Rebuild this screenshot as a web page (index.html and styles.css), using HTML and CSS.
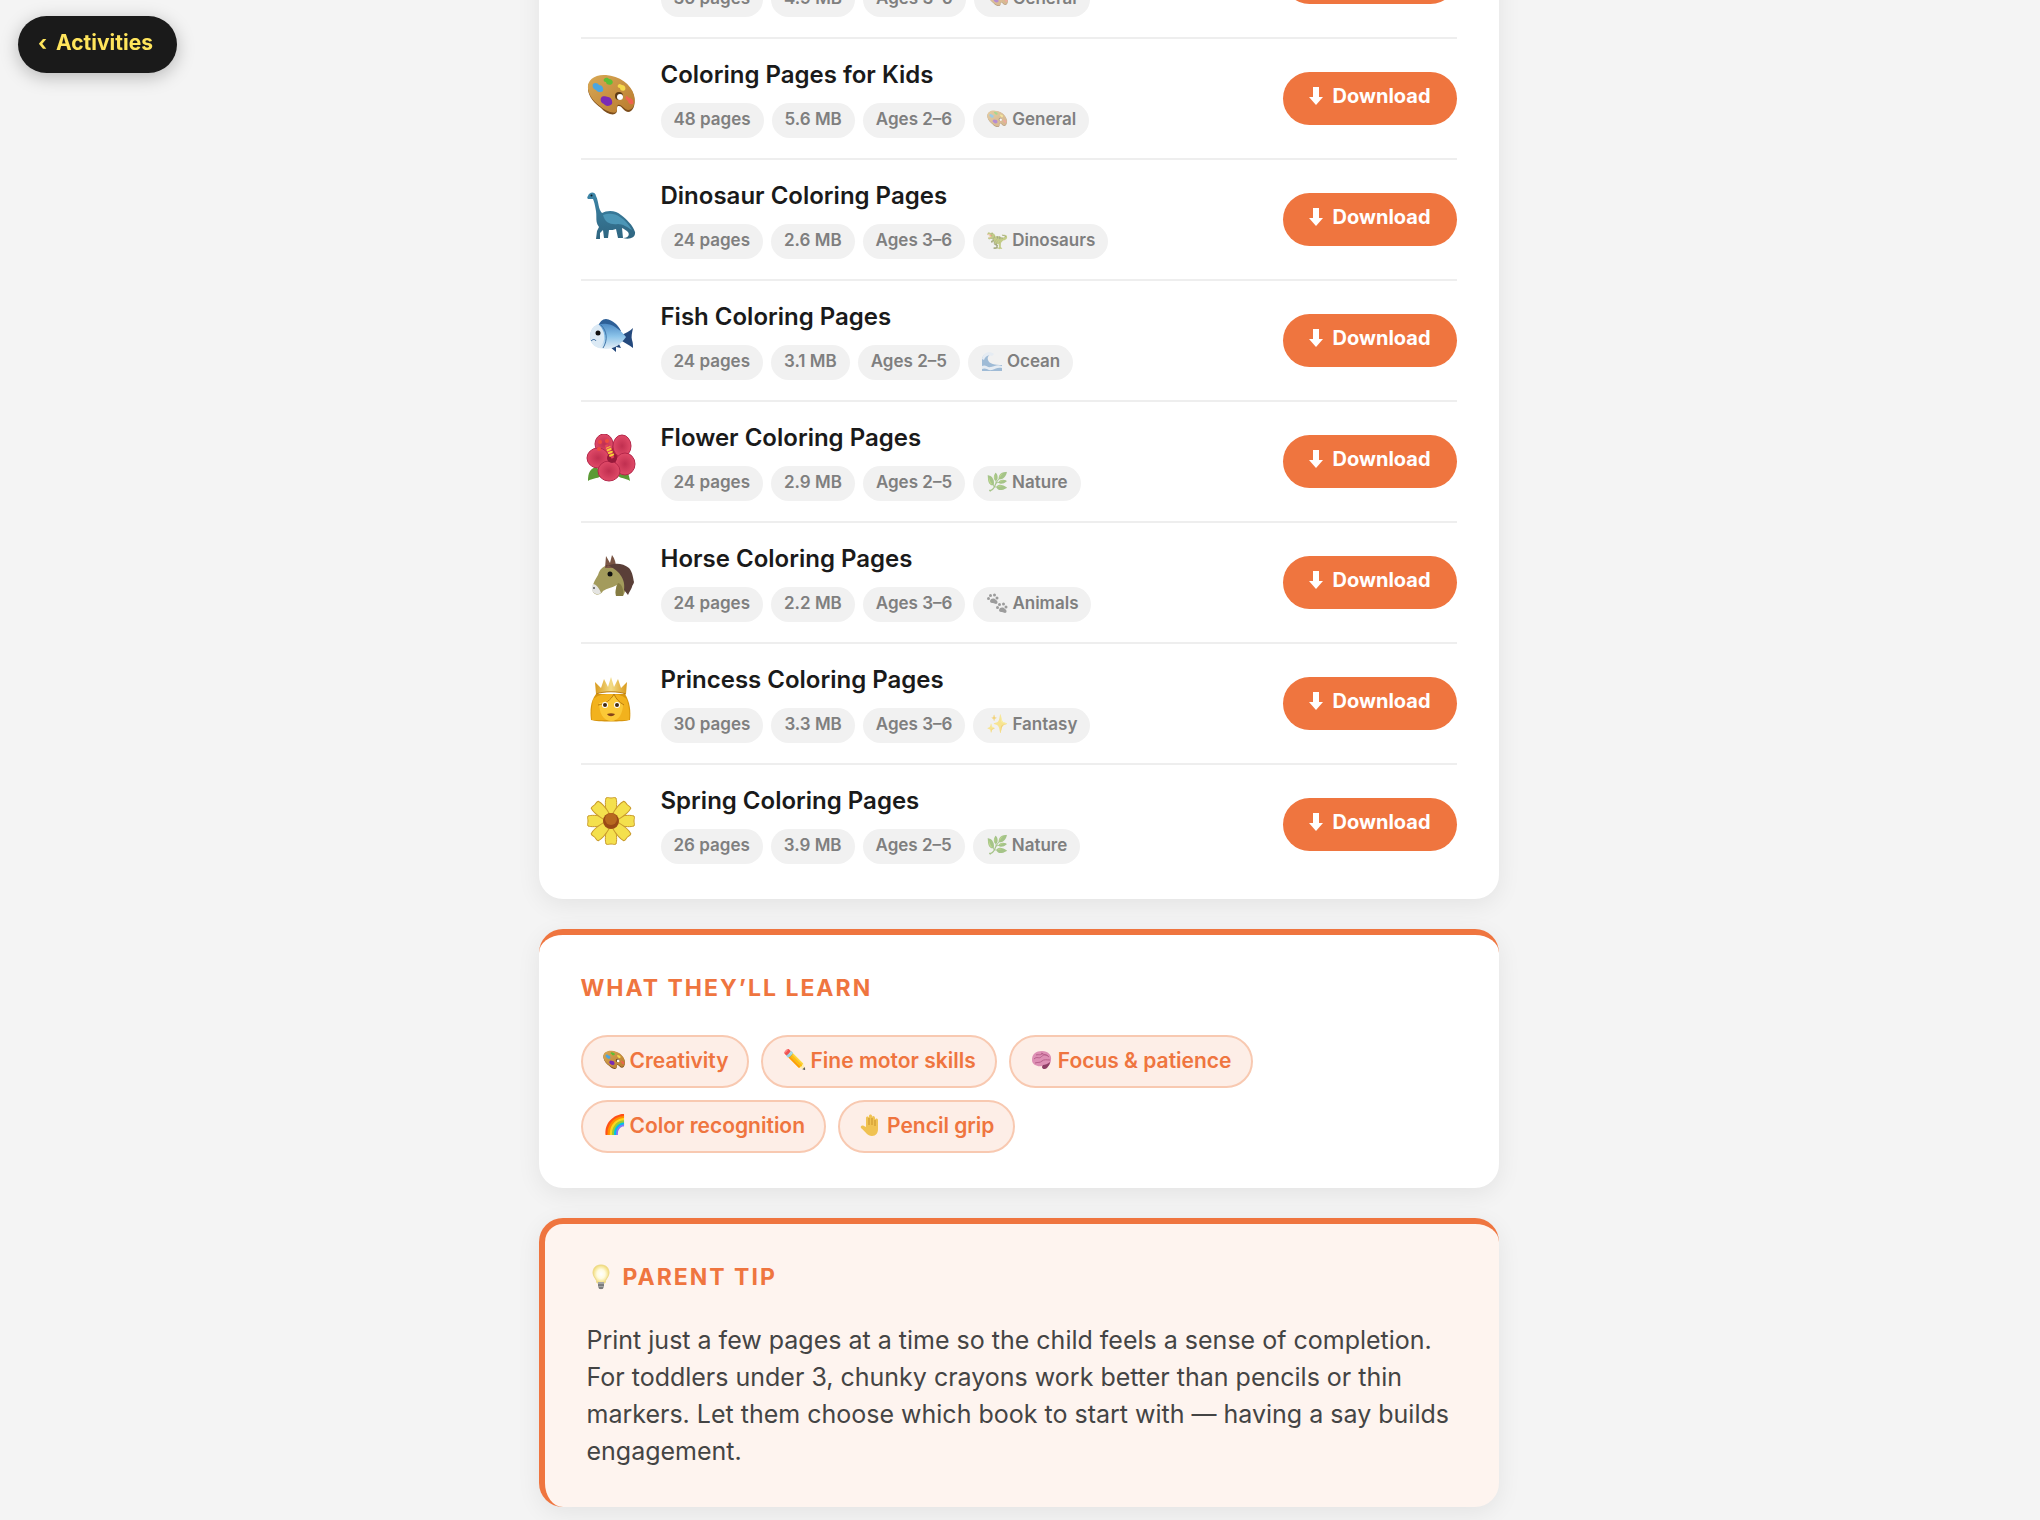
FILE: index.html
```html
<!DOCTYPE html>
<html lang="en">
<head>
  <meta charset="UTF-8">
  <meta name="viewport" content="width=device-width, initial-scale=1">
  <title>Coloring Pages</title>
  <link rel="stylesheet" href="styles.css">
</head>
<body>

  <!-- Icon set -->
  <svg class="sprite" aria-hidden="true">
    <defs>
      <linearGradient id="woodFill" x1="0" y1="0" x2="1" y2="1">
        <stop offset="0" stop-color="#d9a955"/>
        <stop offset="1" stop-color="#b87a2e"/>
      </linearGradient>
      <linearGradient id="dinoFill" x1="0" y1="0" x2="0" y2="1">
        <stop offset="0" stop-color="#3d86a8"/>
        <stop offset="1" stop-color="#2f6580"/>
      </linearGradient>
      <linearGradient id="fishFill" x1="0" y1="0" x2="0" y2="1">
        <stop offset="0" stop-color="#4f8cc6"/>
        <stop offset=".5" stop-color="#8cc4ea"/>
        <stop offset="1" stop-color="#e6eff6"/>
      </linearGradient>
      <linearGradient id="crownFill" x1="0" y1="0" x2="1" y2="0">
        <stop offset="0" stop-color="#d99a1c"/>
        <stop offset=".5" stop-color="#f3dc86"/>
        <stop offset="1" stop-color="#d99a1c"/>
      </linearGradient>
      <radialGradient id="petalFill">
        <stop offset="0" stop-color="#c02f50"/>
        <stop offset="1" stop-color="#e04a68"/>
      </radialGradient>
      <radialGradient id="bulbFill">
        <stop offset="0" stop-color="#ffffff"/>
        <stop offset=".5" stop-color="#fffbe0"/>
        <stop offset="1" stop-color="#f3dd7c"/>
      </radialGradient>
    </defs>

    <symbol id="palette" viewBox="0 0 48 48">
      <path d="M1 18C0 10 8 4 19 5c13 1 25 9 28 20 2 9-1 16-6 16-5-1-6-7-10-6-2 1 0 5-2 7-2 3-10 1-15-5C7 32 2 26 1 19z" fill="#7d4e1c"/>
      <path d="M1 17C0 9 8 3 19 4c13 1 25 9 28 20 2 9-1 15-6 15-5-1-6-6-10-5-2 1 0 5-2 7-2 2-10-1-15-5C7 31 2 25 1 18z" fill="url(#woodFill)"/>
      <circle cx="32" cy="25" r="4" fill="#5d3a15"/>
      <circle cx="33" cy="26" r="3" fill="#fff"/>
      <path d="M6 13c2-2 5-1 6 1 3 0 5 3 4 6-2 2-6 1-7-1-3-1-4-4-3-6z" fill="#4ba6e0"/>
      <path d="M17 8c2-2 4-1 5 0 3 0 5 3 3 5-3 2-6 0-6-2-2 0-3-2-2-3z" fill="#5cbf35"/>
      <path d="M31 14c2-2 3 0 4 0 3 0 4 3 3 5-3 2-5 0-5-2-2 0-3-2-2-3z" fill="#f5d94a"/>
      <path d="M39 25c2 0 2 2 4 2 3 1 4 4 3 6-3 1-5-1-5-3-2-1-3-3-2-5z" fill="#ef6350"/>
      <path d="M14 27c2-3 5-1 7-1 3 0 5 4 4 7-3 3-7 2-8 0-3-1-4-4-3-6z" fill="#7a2bb5"/>
    </symbol>

    <symbol id="sauropod" viewBox="0 0 48 48">
      <path d="M1 4C2 0 8-1 9 4c3 6 2 13 6 17 5-3 14-3 19 2 5 4 12 10 14 17 1 6-6 8-12 6 5 0 7-3 5-6-2-2-4-3-6-4l1 10h-5l-2-9c-2 1-5 1-7 1l-1 8h-4l-1-8-3 3 0 6H9l1-8 2-4c-4-5-2-10-3-16C8 13 7 9 6 7H1C0 6 0 5 1 4z" fill="url(#dinoFill)"/>
      <path d="M16 23c5-2 12-2 17 2 5 3 9 8 12 13-5-3-9-6-14-6-7 1-13-1-15-9z" fill="#4c96b6"/>
      <circle cx="4.500" cy="3.500" r="1" fill="#0d1d26"/>
    </symbol>

    <symbol id="fish" viewBox="0 0 48 48">
      <path d="M11 13c2-4 4-7 8-7 7 1 12 6 15 12l-8 5z" fill="#2d5f97"/>
      <path d="M33 22c5-1 10-4 13-7-1 5-2 9-1 12 1 3 1 5 1 8-4-3-9-6-13-8z" fill="#24497d"/>
      <path d="M22 33l7 6 0-5 5 1-3-6z" fill="#24497d"/>
      <path d="M3 23C4 14 11 10 20 11c8 1 14 7 19 13-5 7-11 12-20 12C10 36 3 32 3 23z" fill="url(#fishFill)"/>
      <path d="M3 23c0-7 4-10 8-12 5 4 7 10 6 16-1 4-3 6-5 8-5-2-9-5-9-12z" fill="#dceaf5"/>
      <path d="M14 12c6 6 7 15 2 23" fill="none" stroke="#3f74a8"/>
      <circle cx="11" cy="20" r="2.500" fill="#111"/>
      <path d="M4 28c2-2 4-2 5 0" fill="none" stroke="#2d5f97"/>
    </symbol>

    <symbol id="hibiscus" viewBox="0 0 48 48">
      <path d="M1 47c0-8 2-13 9-14l4 9c-4 3-9 2-13 5zM43 47c-1-7-3-12-8-14l-4 9c4 3 8 2 12 5z" fill="#5b9a35"/>
      <circle cx="24" cy="23" r="10" fill="#a81e40"/>
      <g fill="url(#petalFill)" stroke="#b5274a">
        <ellipse cx="35" cy="12" rx="9" ry="11"/>
        <ellipse cx="17" cy="10" rx="9" ry="10"/>
        <ellipse cx="11" cy="24" rx="11" ry="10"/>
        <ellipse cx="38" cy="30" rx="10" ry="11"/>
        <ellipse cx="22" cy="37" rx="11" ry="10"/>
      </g>
      <circle cx="25" cy="24" r="5" fill="#96193a"/>
      <path d="M26 24L19 11" stroke="#e8445c" stroke-width="3"/>
      <path d="M25 22l-4-9" stroke="#f7d437" stroke-width="5" stroke-dasharray="2 1"/>
      <g fill="#ef4d3e"><circle cx="13" cy="8" r="2"/><circle cx="20" cy="7" r="2"/><circle cx="12" cy="15" r="2"/></g>
    </symbol>

    <symbol id="horse" viewBox="0 0 48 48">
      <path d="M18 11c4-3 9-2 13 1 5 4 7 11 7 18 1 4 0 8-2 11h-7c-1-4 0-8 1-11-5 3-10 3-14 6-2 4-7 5-10 1-2-6 2-12 5-17 1-4 3-7 7-9z" fill="#a39b5c"/>
      <path d="M31 28c4 1 6 7 5 13h-7c-1-5 0-9 2-13z" fill="#857c43"/>
      <path d="M6 29c3 0 7 5 8 9-2 2-7 1-8-1-2-3-1-6 0-8z" fill="#e4e4e2"/>
      <path d="M18 13l1-12 4 7 2-8c3 4 4 8 4 13z" fill="#7a5544"/>
      <path d="M19 10c5 1 9 4 13 8 4 5 6 10 5 17l4 5c1-3 3-5 4-8 0-2 2-3 2-5-1-4-1-9-5-14-6-5-16-6-23-1z" fill="#5a3f38"/>
      <circle cx="23" cy="19" r="2.500" fill="#111"/>
      <circle cx="7" cy="33" r="1" fill="#555"/>
    </symbol>

    <symbol id="princess" viewBox="0 0 48 48">
      <path d="M9 18c-6 8-6 17-5 26 7 2 32 2 39 0 1-9 0-18-5-26z" fill="#d8960e"/>
      <path d="M6 24c4-8 30-8 34 0 2 7 3 14 2 20H5c-1-7 0-14 1-20z" fill="#f2b21d"/>
      <path d="M12 27c6-1 12-4 15-8 2 4 5 7 9 9 0 9-4 17-12 17S12 36 12 27z" fill="#fbc937"/>
      <path d="M11 29c7-1 13-5 16-11 2 5 5 8 10 11" fill="none" stroke="#ba7b0b"/>
      <path d="M9 18L8 6l6 6 3-9 4 8 3-10 3 10 4-8 3 9 6-6-1 12c-8-3-22-3-30 0z" fill="url(#crownFill)"/>
      <path d="M9 18c8-3 22-3 30 0" fill="none" stroke="#b97c12"/>
      <g fill="#fff"><circle cx="18" cy="29" r="3"/><circle cx="30" cy="29" r="3"/></g>
      <g fill="#402b12"><circle cx="18" cy="29" r="2"/><circle cx="30" cy="29" r="2"/></g>
      <path d="M20 38c3-1 5-1 8 0-2 3-6 3-8 0z" fill="#84431a"/>
    </symbol>

    <symbol id="daisy" viewBox="0 0 48 48">
      <g fill="#f4e04d" stroke="#c99a2b">
        <g id="petals">
          <path d="M20 18C18 10 18 4 19 1c2-1 3 0 5 0s3-1 5 0c1 3 1 9-1 17z"/>
          <path d="M20 30c-2 8-2 14-1 17 2 1 3 0 5 0s3 1 5 0c1-3 1-9-1-17z"/>
          <path d="M18 20C10 18 4 18 1 19c-1 2 0 3 0 5s-1 3 0 5c3 1 9 1 17-1z"/>
          <path d="M30 20c8-2 14-2 17-1 1 2 0 3 0 5s1 3 0 5c-3 1-9 1-17-1z"/>
        </g>
        <use href="#petals" transform="rotate(45 24 24)"/>
      </g>
      <circle cx="24" cy="24" r="8" fill="#9a4a16"/>
      <circle cx="24" cy="22" r="6" fill="#b8691f"/>
    </symbol>

    <symbol id="wave" viewBox="0 0 20 20">
      <path d="M0 20V8c1-5 6-7 11-5-4 0-6 3-5 6 1 4 7 5 14 5v6z" fill="#4f86bd"/>
      <path d="M0 8c1-6 7-9 12-5l-2 2C6 3 3 6 2 9zM0 15c4-2 5 2 9 1s6-3 11-1v2c-5-1-6 1-10 2S4 16 0 18z" fill="#dce9f5"/>
    </symbol>

    <symbol id="paws" viewBox="0 0 20 20">
      <g id="paw" fill="#4a4a4a">
        <path d="M3 8c1-3 4-3 6-1 2 1 2 4 0 4-1 0-2-1-3-1s-3 0-3-2z"/>
        <circle cx="1.500" cy="5.500" r="1.500"/><circle cx="3.500" cy="2.500" r="1.500"/>
        <circle cx="7.500" cy="2" r="1.500"/><circle cx="10" cy="5" r="1.500"/>
      </g>
      <use href="#paw" x="9" y="9"/>
    </symbol>

    <symbol id="brain" viewBox="0 0 22 22">
      <path d="M1 11c0-6 4-9 10-9 6 0 10 4 9 9 0 4-3 5-4 7-2 2-5 1-5-1-4 1-10-1-10-6z" fill="#dd8fb4"/>
      <path d="M12 16c2 0 5-1 7-3 0 3-2 4-3 6-2 2-5 1-5-1z" fill="#8e3f66"/>
      <path d="M3 10c3-3 5 0 7-2s4-3 7-1M5 6c3-1 4 1 7-2M4 14c3-1 5 0 7-2s5-1 8-1M10 4c2 2 6 1 8 4" fill="none" stroke="#b8608b"/>
    </symbol>

    <symbol id="hand" viewBox="0 0 22 22">
      <path d="M6 13V4c0-2 3-2 3 0V2c0-2 3-2 3 0v2c0-3 3-2 3 0v2c0-2 3-2 3 0v9c0 4-2 7-6 7-5 0-6-4-11-8-1-2 1-3 3-2z" fill="#f0c252"/>
      <path d="M9 4v7M12 4v7M15 6v6" stroke="#c9922b" fill="none"/>
    </symbol>

    <symbol id="bulb" viewBox="0 0 26 26">
      <path d="M13 1c-5 0-8 3-8 8 0 4 4 6 4 10h8c0-4 4-6 4-10 0-5-3-8-8-8z" fill="url(#bulbFill)" stroke="#ecd98a"/>
      <path d="M10 18h6v5c-1 3-5 3-6 0z" fill="#a5a5a5"/>
      <path d="M10 21h6M11 24h4" stroke="#555"/>
    </symbol>

    <symbol id="arrow" viewBox="0 0 14 18">
      <path d="M4 0h6v10h4l-7 8-7-8h4z" fill="#fff"/>
    </symbol>
  </svg>

  <a class="back-btn" href="#"><span class="chevron">‹</span>Activities</a>

  <main class="page">

    <section class="card">
      <ul class="books">
        <li class="book">
          <svg class="book-icon"><use href="#palette"/></svg>
          <div class="book-info">
            <h3>Cars Coloring Pages</h3>
            <div class="tags">
              <span class="tag">36 pages</span><span class="tag">4.9 MB</span><span class="tag">Ages 3–6</span>
              <span class="tag"><svg class="tag-icon"><use href="#palette"/></svg>General</span>
            </div>
          </div>
          <button class="download" type="button"><svg><use href="#arrow"/></svg>Download</button>
        </li>
        <li class="book">
          <svg class="book-icon"><use href="#palette"/></svg>
          <div class="book-info">
            <h3>Coloring Pages for Kids</h3>
            <div class="tags">
              <span class="tag">48 pages</span><span class="tag">5.6 MB</span><span class="tag">Ages 2–6</span>
              <span class="tag"><svg class="tag-icon"><use href="#palette"/></svg>General</span>
            </div>
          </div>
          <button class="download" type="button"><svg><use href="#arrow"/></svg>Download</button>
        </li>
        <li class="book">
          <svg class="book-icon"><use href="#sauropod"/></svg>
          <div class="book-info">
            <h3>Dinosaur Coloring Pages</h3>
            <div class="tags">
              <span class="tag">24 pages</span><span class="tag">2.6 MB</span><span class="tag">Ages 3–6</span>
              <span class="tag"><span class="tag-icon">🦖</span>Dinosaurs</span>
            </div>
          </div>
          <button class="download" type="button"><svg><use href="#arrow"/></svg>Download</button>
        </li>
        <li class="book">
          <svg class="book-icon"><use href="#fish"/></svg>
          <div class="book-info">
            <h3>Fish Coloring Pages</h3>
            <div class="tags">
              <span class="tag">24 pages</span><span class="tag">3.1 MB</span><span class="tag">Ages 2–5</span>
              <span class="tag"><svg class="tag-icon"><use href="#wave"/></svg>Ocean</span>
            </div>
          </div>
          <button class="download" type="button"><svg><use href="#arrow"/></svg>Download</button>
        </li>
        <li class="book">
          <svg class="book-icon"><use href="#hibiscus"/></svg>
          <div class="book-info">
            <h3>Flower Coloring Pages</h3>
            <div class="tags">
              <span class="tag">24 pages</span><span class="tag">2.9 MB</span><span class="tag">Ages 2–5</span>
              <span class="tag"><span class="tag-icon">🌿</span>Nature</span>
            </div>
          </div>
          <button class="download" type="button"><svg><use href="#arrow"/></svg>Download</button>
        </li>
        <li class="book">
          <svg class="book-icon"><use href="#horse"/></svg>
          <div class="book-info">
            <h3>Horse Coloring Pages</h3>
            <div class="tags">
              <span class="tag">24 pages</span><span class="tag">2.2 MB</span><span class="tag">Ages 3–6</span>
              <span class="tag"><svg class="tag-icon"><use href="#paws"/></svg>Animals</span>
            </div>
          </div>
          <button class="download" type="button"><svg><use href="#arrow"/></svg>Download</button>
        </li>
        <li class="book">
          <svg class="book-icon"><use href="#princess"/></svg>
          <div class="book-info">
            <h3>Princess Coloring Pages</h3>
            <div class="tags">
              <span class="tag">30 pages</span><span class="tag">3.3 MB</span><span class="tag">Ages 3–6</span>
              <span class="tag"><span class="tag-icon">✨</span>Fantasy</span>
            </div>
          </div>
          <button class="download" type="button"><svg><use href="#arrow"/></svg>Download</button>
        </li>
        <li class="book">
          <svg class="book-icon"><use href="#daisy"/></svg>
          <div class="book-info">
            <h3>Spring Coloring Pages</h3>
            <div class="tags">
              <span class="tag">26 pages</span><span class="tag">3.9 MB</span><span class="tag">Ages 2–5</span>
              <span class="tag"><span class="tag-icon">🌿</span>Nature</span>
            </div>
          </div>
          <button class="download" type="button"><svg><use href="#arrow"/></svg>Download</button>
        </li>
      </ul>
    </section>

    <section class="card learn">
      <h2>What they’ll learn</h2>
      <div class="skills">
        <span class="skill"><svg class="skill-icon"><use href="#palette"/></svg>Creativity</span>
        <span class="skill"><span class="skill-icon">✏️</span>Fine motor skills</span>
        <span class="skill"><svg class="skill-icon"><use href="#brain"/></svg>Focus &amp; patience</span>
        <span class="skill"><span class="skill-icon">🌈</span>Color recognition</span>
        <span class="skill"><svg class="skill-icon"><use href="#hand"/></svg>Pencil grip</span>
      </div>
    </section>

    <section class="card tip">
      <h2><svg class="tip-icon"><use href="#bulb"/></svg>Parent tip</h2>
      <p>Print just a few pages at a time so the child feels a sense of completion. For toddlers under 3, chunky crayons work better than pencils or thin markers. Let them choose which book to start with — having a say builds engagement.</p>
    </section>

  </main>

</body>
</html>
```
FILE: styles.css
```css
* {
  box-sizing: border-box;
}

body {
  font-family: Inter, "Open Sans", sans-serif;
  background: #f4f4f4;
  margin: 0;
  padding: 0 23px 40px 20px;
  color: #1a1a1a;
}

.sprite {
  position: absolute;
  width: 0;
  height: 0;
}

.back-btn {
  position: fixed;
  top: 16px;
  left: 18px;
  z-index: 10;
  display: flex;
  align-items: center;
  gap: 9px;
  height: 57px;
  padding: 0 24px 5px 20px;
  border-radius: 30px;
  background: #1a1a1a;
  color: #ffe55c;
  font-size: 21px;
  font-weight: 700;
  text-decoration: none;
  box-shadow: 0 4px 18px rgba(0, 0, 0, 0.25);
}

.page {
  max-width: 960px;
  margin: -124px auto 0;
}

.card {
  background: #fff;
  border-top: 6px solid #ef753f;
  border-radius: 24px;
  padding: 36px 42px 35px;
  margin-bottom: 30px;
  box-shadow: 0 6px 24px rgba(0, 0, 0, 0.07);
}

.card:first-child {
  padding-bottom: 15px;
}

.card h2 {
  display: flex;
  align-items: center;
  gap: 8px;
  margin: 0 0 30px;
  font-size: 23px;
  line-height: 34px;
  font-weight: 700;
  letter-spacing: 2px;
  text-transform: uppercase;
  color: #ef753f;
}

/* Book list */
.books {
  list-style: none;
  margin: 0;
  padding: 0;
}

.book {
  display: flex;
  align-items: center;
  gap: 20px;
  padding: 21px 0 20px;
  border-bottom: 2px solid #eee;
}

.book:last-child {
  border-bottom: none;
}

.book-icon {
  flex: none;
  width: 60px;
  height: 48px;
  margin-bottom: 8px;
}

.book-info {
  flex: 1;
}

.book-info h3 {
  margin: 0 0 13px;
  font-size: 24px;
  line-height: 30px;
  font-weight: 600;
}

.tags {
  display: flex;
  flex-wrap: wrap;
  gap: 8px;
}

.tag {
  display: flex;
  align-items: center;
  gap: 4px;
  height: 35px;
  padding: 0 13px 4px;
  border-radius: 18px;
  background: #f1f1f1;
  color: #7f7f7f;
  font-size: 17px;
  font-weight: 600;
}

.tag-icon {
  width: 22px;
  height: 20px;
  font-size: 18px;
  line-height: 20px;
  opacity: 0.5;
}

.download {
  display: flex;
  align-items: center;
  gap: 10px;
  height: 53px;
  padding: 0 26px 4px;
  margin-bottom: 2px;
  border: none;
  border-radius: 27px;
  background: #ef753f;
  color: #fff;
  font: 700 20px Inter, "Open Sans", sans-serif;
  cursor: pointer;
}

.download:hover {
  background: #dd6530;
}

.download svg {
  width: 14px;
  height: 18px;
}

/* Skills */
.skills {
  display: flex;
  flex-wrap: wrap;
  gap: 12px;
}

.skill {
  display: flex;
  align-items: center;
  gap: 5px;
  height: 53px;
  padding: 0 19px 3px 20px;
  border: 2px solid #f8c9b1;
  border-radius: 27px;
  background: #fdeee7;
  color: #ef753f;
  font-size: 21px;
  font-weight: 600;
}

.skill-icon {
  width: 22px;
  height: 22px;
  font-size: 19px;
  line-height: 22px;
}

/* Parent tip */
.tip {
  background: #fef4ef;
  border-left: 6px solid #ef753f;
}

.tip-icon {
  width: 28px;
  height: 26px;
}

.tip h2 {
  margin-bottom: 28px;
}

.tip p {
  margin: 0 0 2px;
  font-size: 25px;
  line-height: 37px;
  color: #444;
}
```
